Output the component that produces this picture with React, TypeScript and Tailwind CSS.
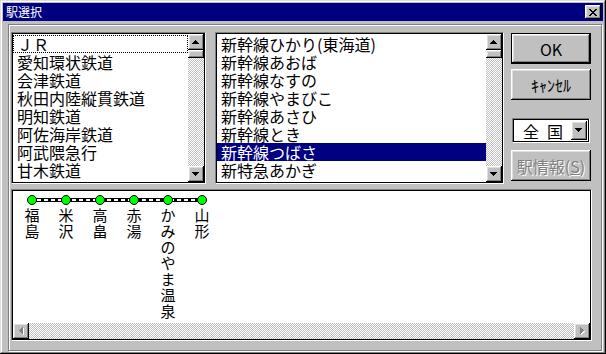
import React from 'react';

// Win95-style bevels
const RAISED = 'shadow-[inset_-1px_-1px_#000,inset_1px_1px_#fff,inset_-2px_-2px_#808080,inset_2px_2px_#dfdfdf]';
const SUNKEN_OUTER = 'border border-t-[#808080] border-l-[#808080] border-r-white border-b-white';
const DITHER = 'bg-[repeating-conic-gradient(#c0c0c0_0_25%,#fff_0_50%)] bg-[length:2px_2px]';

const railways = ['ＪＲ', '愛知環状鉄道', '会津鉄道', '秋田内陸縦貫鉄道', '明知鉄道', '阿佐海岸鉄道', '阿武隈急行', '甘木鉄道'];
const lines = ['新幹線ひかり(東海道)', '新幹線あおば', '新幹線なすの', '新幹線やまびこ', '新幹線あさひ', '新幹線とき', '新幹線つばさ', '新特急あかぎ'];
const stations = ['福島', '米沢', '高畠', '赤湯', 'かみのやま温泉', '山形'];

type Dir = 'up' | 'down' | 'left' | 'right';

const Arrow: React.FC<{ dir: Dir; disabled?: boolean }> = ({ dir, disabled }) => {
  const pts: Record<Dir, string> = {
    up: '3.5,0 7,4 0,4',
    down: '0,0 7,0 3.5,4',
    left: '4,0 4,7 0,3.5',
    right: '0,0 4,3.5 0,7',
  };
  const horiz = dir === 'up' || dir === 'down';
  const w = horiz ? 7 : 4;
  const h = horiz ? 4 : 7;
  return (
    <svg width={w + 1} height={h + 1} viewBox={`0 0 ${w + 1} ${h + 1}`} shapeRendering="crispEdges">
      {disabled && <polygon points={pts[dir]} fill="#fff" transform="translate(1,1)" />}
      <polygon points={pts[dir]} fill={disabled ? '#808080' : '#000'} />
    </svg>
  );
};

const ScrollButton: React.FC<{ dir: Dir; disabled?: boolean }> = ({ dir, disabled }) => (
  <div className={`w-[16px] h-[16px] shrink-0 bg-[#c0c0c0] flex items-center justify-center ${RAISED}`}>
    <Arrow dir={dir} disabled={disabled} />
  </div>
);

const VScrollbar: React.FC = () => (
  <div className="w-[16px] h-full flex flex-col">
    <ScrollButton dir="up" />
    <div className={`h-[8px] shrink-0 bg-[#c0c0c0] ${RAISED}`} />
    <div className={`flex-1 ${DITHER}`} />
    <ScrollButton dir="down" />
  </div>
);

interface ListBoxProps {
  items: string[];
  selected?: number;
  focused?: number;
  className: string;
}

const ListBox: React.FC<ListBoxProps> = ({ items, selected, focused, className }) => (
  <div className={`h-full ${SUNKEN_OUTER} ${className}`}>
    <div className="h-full border border-black bg-white flex">
      <div className="flex-1 overflow-hidden pt-[1px]">
        {items.map((item, i) => (
          <div
            key={item}
            className={`h-[18px] text-[16px] leading-[18px] pl-[4px] whitespace-nowrap ${
              i === selected ? 'bg-[#000080] text-white' : 'text-black'
            } ${i === focused ? 'outline-1 outline-dotted outline-black -outline-offset-1' : ''}`}
          >
            {item}
          </div>
        ))}
      </div>
      <VScrollbar />
    </div>
  </div>
);

const Button: React.FC<{ children: React.ReactNode; className?: string; isDefault?: boolean }> = ({ children, className = '', isDefault }) =>
  isDefault ? (
    <div className={`border border-black ${className}`}>
      <div className={`h-full flex items-center justify-center text-[16px] text-black ${RAISED}`}>{children}</div>
    </div>
  ) : (
    <div className={`flex items-center justify-center text-[16px] text-black ${RAISED} ${className}`}>{children}</div>
  );

// Route diagram: dots on a dashed rail line with vertical station names
const RouteMap: React.FC = () => {
  const pitch = 34;
  const x0 = 19;
  const x1 = x0 + pitch * (stations.length - 1);
  return (
    <div className="flex-1 relative overflow-hidden">
      <svg width="240" height="16" className="block" shapeRendering="crispEdges">
        <rect x={x0} y={7} width={x1 - x0} height={4} fill="#000" />
        <line x1={x0 + 5} y1={9} x2={x1} y2={9} stroke="#fff" strokeWidth={2} strokeDasharray="4 3" />
        {stations.map((_, i) => (
          <circle key={i} cx={x0 + i * pitch} cy={9} r={4.5} fill="#00ff00" stroke="#000" strokeWidth={1} shapeRendering="auto" />
        ))}
      </svg>
      <div className="flex pl-[2px]">
        {stations.map(name => (
          <div key={name} className="w-[34px] flex flex-col items-center">
            {Array.from(name).map((ch, i) => (
              <div key={i} className="h-[16px] text-[15px] leading-[16px] text-black">{ch}</div>
            ))}
          </div>
        ))}
      </div>
    </div>
  );
};

const App: React.FC = () => {
  return (
    <div className="w-[606px] h-[354px] bg-[#c0c0c0] p-[3px] flex flex-col font-['Noto_Sans_CJK_JP',sans-serif] shadow-[inset_-1px_-1px_#000,inset_1px_1px_#dfdfdf,inset_-2px_-2px_#808080,inset_2px_2px_#fff] overflow-hidden">
      {/* title bar */}
      <div className="h-[18px] bg-[#000080] flex items-center pl-[3px] pr-[2px]">
        <span className="text-white text-[12px] leading-[14px] flex-1">駅選択</span>
        <div className={`w-[16px] h-[14px] bg-[#c0c0c0] flex items-center justify-center ${RAISED}`}>
          <svg width="8" height="7" viewBox="0 0 8 7" shapeRendering="crispEdges">
            <path d="M0 0h2v1h-2zM6 0h2v1h-2zM1 1h2v1h-2zM5 1h2v1h-2zM2 2h4v1h-4zM3 3h2v1h-2zM2 4h4v1h-4zM1 5h2v1h-2zM5 5h2v1h-2zM0 6h2v1h-2zM6 6h2v1h-2z" fill="#000" />
          </svg>
        </div>
      </div>

      {/* etched frame */}
      <div className="ml-[5px] mt-[3px] w-[594px] h-[327px] border border-[#808080] shadow-[1px_1px_0_#fff,inset_1px_1px_0_#fff] pl-[2px] pt-[7px]">
        <div className="flex h-[152px]">
          <ListBox items={railways} focused={0} className="w-[195px]" />
          <ListBox items={lines} selected={6} className="w-[289px] ml-[9px]" />

          <div className="w-[80px] ml-[7px] flex flex-col pt-[1px]">
            <Button isDefault className="h-[31px]">OK</Button>
            <Button className="h-[31px] mt-[5px]">ｷｬﾝｾﾙ</Button>
            <div className={`mt-[18px] ml-[1px] w-[78px] h-[25px] ${SUNKEN_OUTER}`}>
              <div className="h-full border border-black bg-white flex items-center pl-[9px] pr-[1px]">
                <div className="flex-1 flex gap-[8px] text-[16px] leading-[16px] text-black">
                  <span>全</span>
                  <span>国</span>
                </div>
                <div className={`w-[16px] h-[19px] bg-[#c0c0c0] flex items-center justify-center ${RAISED}`}>
                  <Arrow dir="down" />
                </div>
              </div>
            </div>
            <Button className="h-[31px] mt-[7px]">
              <span className="text-[#808080] [text-shadow:1px_1px_0_#fff]">
                駅情報(<span className="underline">S</span>)
              </span>
            </Button>
          </div>
        </div>

        {/* route panel */}
        <div className={`mt-[5px] w-[581px] h-[152px] ${SUNKEN_OUTER}`}>
          <div className="h-full border border-black bg-white flex flex-col">
            <RouteMap />
            <div className="h-[16px] flex">
              <ScrollButton dir="left" disabled />
              <div className={`flex-1 ${DITHER}`} />
              <ScrollButton dir="right" disabled />
            </div>
          </div>
        </div>
      </div>
    </div>
  );
};

export default App;
